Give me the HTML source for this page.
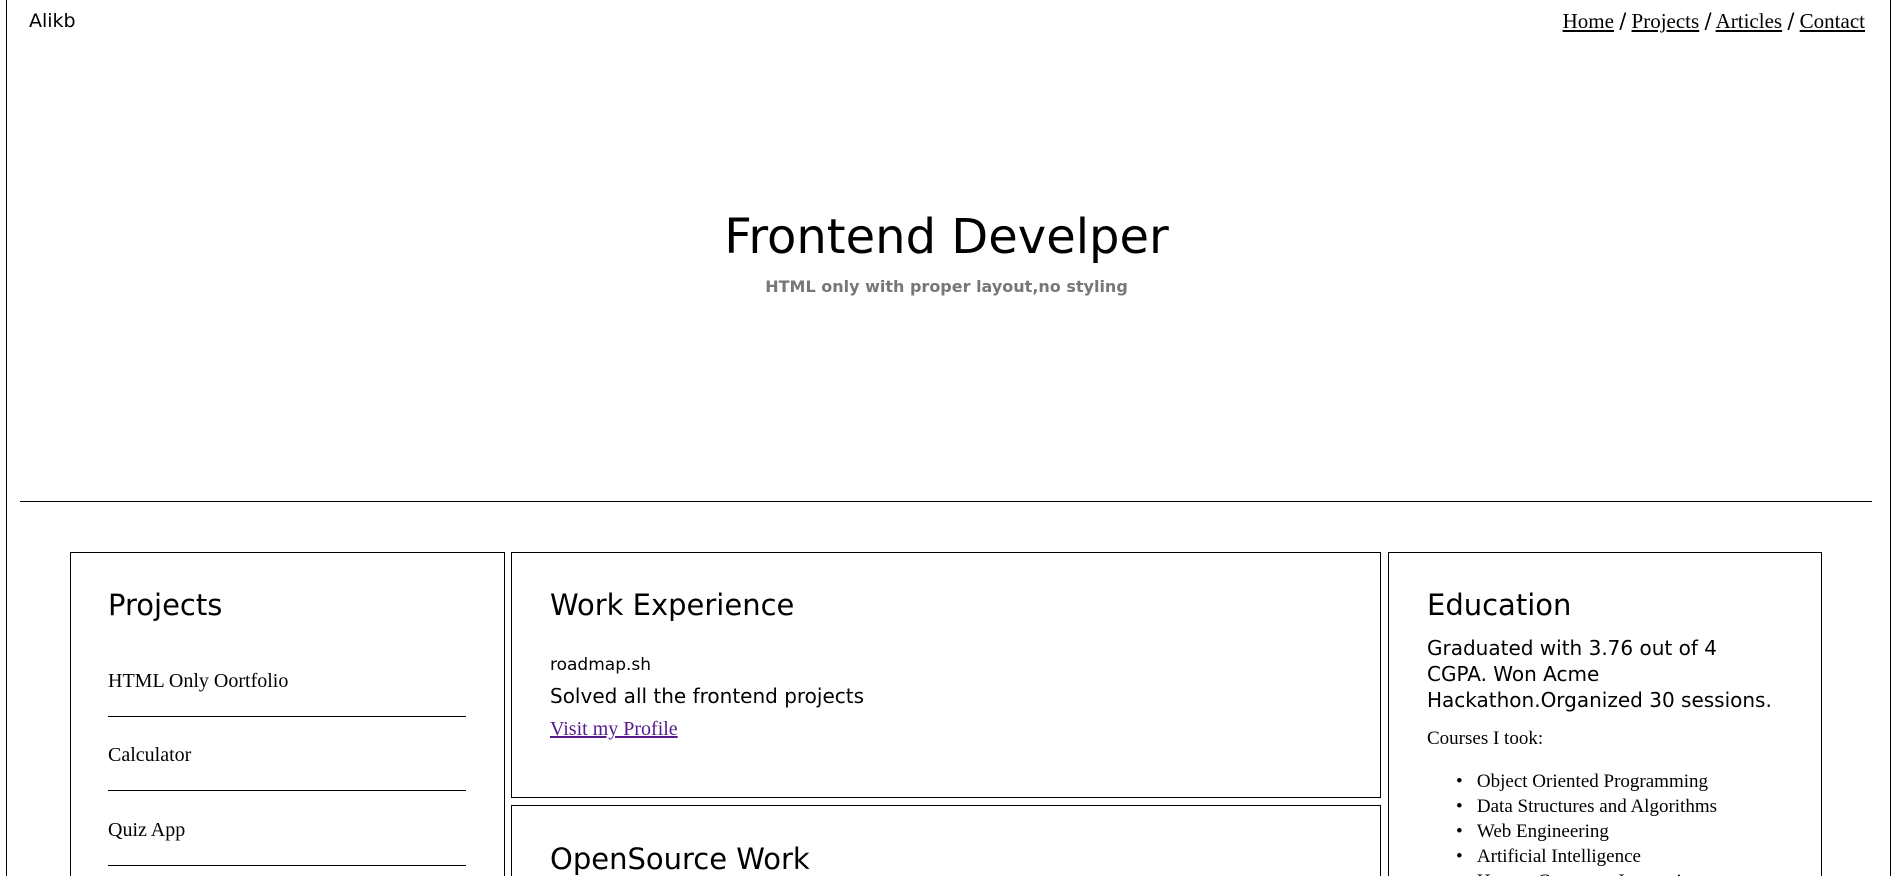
<!DOCTYPE html>
<html style="height:876px;overflow:hidden"><head><meta charset="utf-8"><style>
html,body{margin:0;height:876px;overflow:hidden}
body{width:1893px;background:#fff;position:relative;font-family:"DejaVu Sans",sans-serif;color:#000}
#w{position:absolute;left:0;top:0;width:1893px;height:876px;overflow:hidden}
.a{position:absolute;white-space:nowrap;line-height:1}
.serif{font-family:"Liberation Serif",serif}
.box{position:absolute;border:1px solid #000;box-sizing:border-box}
.ln{position:absolute;height:1px;background:#000}
a{color:#000}
</style></head><body><div id="w">
<div style="position:absolute;left:6px;top:-2px;width:1885px;height:900px;border:1px solid #000;box-sizing:border-box"></div>
<div class="a" style="left:29px;top:12px;font-size:19px">Alikb</div>
<div class="a serif" style="right:28px;top:11px;font-size:21px"><a href="#">Home</a> <span style="font-family:'DejaVu Sans'">/</span> <a href="#">Projects</a> <span style="font-family:'DejaVu Sans'">/</span> <a href="#">Articles</a> <span style="font-family:'DejaVu Sans'">/</span> <a href="#">Contact</a></div>
<div class="a" style="left:0;width:1893px;text-align:center;top:213px;font-size:48px">Frontend Develper</div>
<div class="a" style="left:0;width:1893px;text-align:center;top:279px;font-size:16px;font-weight:bold;color:#777">HTML only with proper layout,no styling</div>
<div class="ln" style="left:20px;width:1852px;top:501px"></div>

<div class="box" style="left:70px;top:552px;width:435px;height:340px"></div>
<div class="a" style="left:108px;top:591px;font-size:29px">Projects</div>
<div class="a serif" style="left:108px;top:671px;font-size:20px">HTML Only Oortfolio</div>
<div class="ln" style="left:108px;width:358px;top:716px"></div>
<div class="a serif" style="left:108px;top:745px;font-size:20px">Calculator</div>
<div class="ln" style="left:108px;width:358px;top:790px"></div>
<div class="a serif" style="left:108px;top:820px;font-size:20px">Quiz App</div>
<div class="ln" style="left:108px;width:358px;top:865px"></div>

<div class="box" style="left:511px;top:552px;width:870px;height:246px"></div>
<div class="a" style="left:550px;top:591px;font-size:29px">Work Experience</div>
<div class="a" style="left:550px;top:657px;font-size:17px">roadmap.sh</div>
<div class="a" style="left:550px;top:686px;font-size:20px">Solved all the frontend projects</div>
<div class="a serif" style="left:550px;top:719px;font-size:20px"><a href="#" style="color:#551a8b">Visit my Profile</a></div>

<div class="box" style="left:511px;top:805px;width:870px;height:100px"></div>
<div class="a" style="left:550px;top:845px;font-size:29px">OpenSource Work</div>

<div class="box" style="left:1388px;top:552px;width:434px;height:340px"></div>
<div class="a" style="left:1427px;top:591px;font-size:29px">Education</div>
<div class="a" style="left:1427px;top:635px;font-size:20px;line-height:26px">Graduated with 3.76 out of 4<br>CGPA. Won Acme<br>Hackathon.Organized 30 sessions.</div>
<div class="a serif" style="left:1427px;top:729px;font-size:19px">Courses I took:</div>
<div class="a serif" style="left:1456px;top:769px;font-size:19px;line-height:25px">
<div>•&nbsp;&nbsp;&nbsp;Object Oriented Programming</div>
<div>•&nbsp;&nbsp;&nbsp;Data Structures and Algorithms</div>
<div>•&nbsp;&nbsp;&nbsp;Web Engineering</div>
<div>•&nbsp;&nbsp;&nbsp;Artificial Intelligence</div>
<div>•&nbsp;&nbsp;&nbsp;Human Computer Interaction</div>
</div>
</div></body></html>
